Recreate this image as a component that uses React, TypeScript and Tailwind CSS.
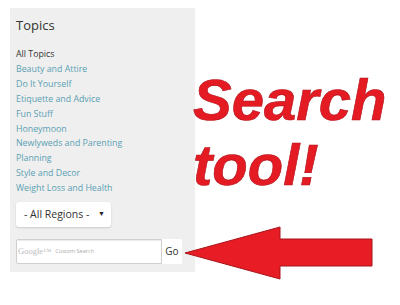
const topics = [
  'Beauty and Attire',
  'Do It Yourself',
  'Etiquette and Advice',
  'Fun Stuff',
  'Honeymoon',
  'Newlyweds and Parenting',
  'Planning',
  'Style and Decor',
  'Weight Loss and Health',
];

export default function App() {
  return (
    <div className="relative w-[400px] h-[305px] bg-white overflow-hidden flex" style={{ fontFamily: '"Open Sans", sans-serif' }}>
      {/* Sidebar */}
      <div className="ml-[10px] mt-[8px] w-[185px] h-[264px] bg-[#efefef] px-[6px] pt-[9px] flex flex-col">
        <h3 className="text-[13px] leading-[16px] text-[#333]">Topics</h3>
        <ul className="mt-[14px] text-[8.8px] leading-[14.9px]">
          <li className="text-[#333]">All Topics</li>
          {topics.map((t) => (
            <li key={t} className="text-[#5aa0b3]">{t}</li>
          ))}
        </ul>
        <div className="mt-[6px] w-[95px] h-[25px] bg-white rounded-[3px] shadow-[0_1px_2px_rgba(0,0,0,0.15)] flex items-center justify-between pl-[8px] pr-[6px]">
          <span className="text-[10.5px] text-[#333]">- All Regions -</span>
          <span className="text-[7px] text-[#222]">▼</span>
        </div>
        <div className="mt-[12px] flex h-[25px] w-[166px]">
          <div className="flex-1 bg-white border border-[#cfcfcf] rounded-l-[2px] flex items-center pl-[1px] shadow-[inset_0_1px_1px_rgba(0,0,0,0.08)]">
            <span className="text-[8.5px] text-[#bbb]" style={{ fontFamily: '"Liberation Serif", serif' }}>Google™</span>
            <span className="text-[5.5px] text-[#aaa] ml-[4px]">Custom Search</span>
          </div>
          <div className="w-[20px] bg-white flex items-center justify-center text-[10px] text-[#333] rounded-r-[2px]">Go</div>
        </div>
      </div>

      {/* Annotation */}
      <div
        className="absolute left-[193px] top-[67px] text-[58px] leading-[65px] font-bold italic text-[#e51b24]"
        style={{ fontFamily: '"Liberation Sans", Arial, sans-serif', WebkitTextStroke: '0.6px #b01018' }}
      >
        <div>Search</div>
        <div>tool!</div>
      </div>
      <svg className="absolute left-0 top-0" width="400" height="305" viewBox="0 0 400 305">
        <polygon
          points="185,253 280,227 280,239 372,239 372,266 280,266 280,279"
          fill="#e81c24"
          stroke="#a8141b"
          strokeWidth="1"
          strokeLinejoin="round"
        />
      </svg>
    </div>
  );
}
